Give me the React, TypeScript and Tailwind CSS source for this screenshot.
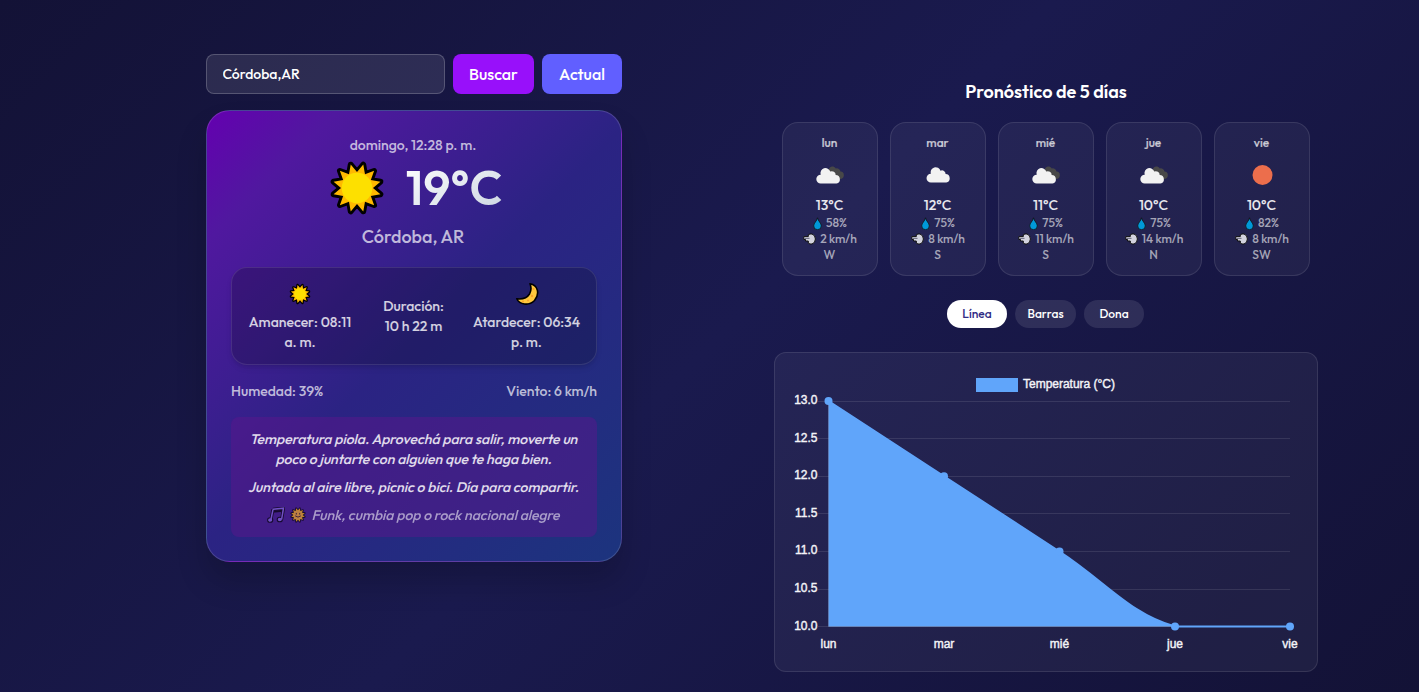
import React from "react";

const RAYS = 12;
function starPoints(outer: number, inner: number, n: number) {
  return Array.from({ length: n * 2 }, (_, i) => {
    const r = i % 2 ? inner : outer;
    const a = (Math.PI * i) / n - Math.PI / 2 + Math.PI / n;
    return `${(32 + r * Math.cos(a)).toFixed(2)},${(32 + r * Math.sin(a)).toFixed(2)}`;
  }).join(" ");
}

function Sun({ size, outline = 6, face = false }: { size: number; outline?: number; face?: boolean }) {
  return (
    <svg width={size} height={size} viewBox="0 0 64 64" className="block shrink-0">
      <polygon points={starPoints(25, 16.5, RAYS)} fill="none" stroke="#000" strokeWidth={outline} strokeLinejoin="round" />
      <polygon points={starPoints(25, 16.5, RAYS)} fill="#ffb900" />
      <circle cx="32" cy="32" r="15.800" fill={face ? "#ffb620" : "#fde000"} />
      {face && (
        <g stroke="#3a2410" strokeWidth="3.500" fill="none" strokeLinecap="round">
          <path d="M26 26v3M38 26v3M23 36q9 8 18 0" />
        </g>
      )}
    </svg>
  );
}

function Moon() {
  return (
    <svg width="24" height="24" viewBox="0 0 24 24" className="block">
      <path d="M15 1.7C23 3 25 12 19.5 18.5C14 24 4.500 23 1.800 16.800C8 17.500 12 16 14.500 12C16.500 8.500 16.300 5 15 1.700Z" fill="#ffc83d" stroke="#000" strokeWidth="1.600" strokeLinejoin="round" />
      <circle cx="18.500" cy="7" r="1.100" fill="#f9a32b" />
      <circle cx="17" cy="14" r="1.200" fill="#f9a32b" />
      <circle cx="8" cy="19.500" r="1" fill="#f9a32b" />
      <circle cx="13" cy="18.500" r="1" fill="#f9a32b" />
    </svg>
  );
}

function Notes() {
  return (
    <svg width="18" height="16" viewBox="0 0 18 16" className="block">
      <path d="M6 2.300L16.500 1.200L14.600 12.500M6 2.300L3.900 13" stroke="#000" strokeWidth="3.200" fill="none" />
      <path d="M5.600 4.800L16 3.700" stroke="#000" strokeWidth="2" fill="none" />
      <ellipse cx="3.200" cy="13" rx="2.600" ry="2.300" fill="#8b6ce8" stroke="#000" strokeWidth="1.100" />
      <ellipse cx="12.800" cy="12.500" rx="2.600" ry="2.300" fill="#8b6ce8" stroke="#000" strokeWidth="1.100" />
      <path d="M6 2.300L16.500 1.200L14.600 12.500M6 2.300L3.900 13" stroke="#8b6ce8" strokeWidth="1.500" fill="none" />
    </svg>
  );
}

const CLOUD = "M5 17A4.400 4.400 0 0 1 4.900 8.200A5 5 0 0 1 14.500 5.200A3.600 3.600 0 0 1 19.600 8.500A4.300 4.300 0 0 1 20.300 17Z";

function WeatherIcon({ kind }: { kind: string }) {
  if (kind === "clear")
    return (
      <svg width="28" height="20" viewBox="0 0 28 20" className="block">
        <circle cx="14.500" cy="10" r="10" fill="#ec6e4c" />
      </svg>
    );
  if (kind === "cloud")
    return (
      <svg width="26" height="16" viewBox="-.5 1.500 25 16" className="block">
        <path d={CLOUD} fill="#f2f2f2" />
      </svg>
    );
  return (
    <svg width="28" height="18" viewBox="0 0 28 18" className="block">
      <path d="M12.500 5.500C12 1 17 -1.500 19.800 2.500A3.800 3.800 0 0 1 24.500 5.600A3.600 3.600 0 0 1 27.800 9.500C27.800 12 26 13.500 23 13Z" fill="#484848" />
      <path d="M4.700 17.500A4.400 4.400 0 0 1 4.700 8.700A5 5 0 0 1 14.300 5.600A3.800 3.800 0 0 1 19.700 9A4.300 4.300 0 0 1 20.500 17.500Z" fill="#f2f2f2" />
    </svg>
  );
}

function Drop() {
  return (
    <svg width="9" height="13" viewBox="0 0 9 13" className="block">
      <path d="M4.500 .8C5 4 8.300 6 8.300 8.900A3.800 3.800 0 0 1 .7 8.900C.7 6 4 4 4.500 .8Z" fill="#0099d8" stroke="#111" strokeWidth=".8" />
    </svg>
  );
}

function Wind() {
  return (
    <svg width="13" height="12" viewBox="0 0 13 12" className="block">
      <path d="M.8 3.600H5.300V1.700Q7 .6 9 1Q12.400 2.200 12.400 6Q12.300 10 9 11Q7 11.300 5.300 10.200V8H2.500V6.500H.8Z" fill="#d3d3de" stroke="#111" strokeWidth="1" strokeLinejoin="round" />
      <path d="M1.200 5.400H6.500" stroke="#77778a" strokeWidth="1.200" />
    </svg>
  );
}

const DAYS = [
  { day: "lun", kind: "clouds", temp: "13°C", hum: "58%", wind: "2 km/h", dir: "W" },
  { day: "mar", kind: "cloud", temp: "12°C", hum: "75%", wind: "8 km/h", dir: "S" },
  { day: "mié", kind: "clouds", temp: "11°C", hum: "75%", wind: "11 km/h", dir: "S" },
  { day: "jue", kind: "clouds", temp: "10°C", hum: "75%", wind: "14 km/h", dir: "N" },
  { day: "vie", kind: "clear", temp: "10°C", hum: "82%", wind: "8 km/h", dir: "SW" },
];

function DayCard({ d }: { d: (typeof DAYS)[number] }) {
  return (
    <div className="flex h-[154px] w-24 flex-col items-center rounded-2xl border border-white/10 bg-white/5 pt-3 pr-px text-xs font-medium leading-4 text-white/60">
      <div className="text-white/70 [-webkit-text-stroke:0.2px]">{d.day}</div>
      <div className="flex h-[46px] items-center pt-0.5">
        <WeatherIcon kind={d.kind} />
      </div>
      <div className="mb-px text-sm leading-[17px] text-white/90">{d.temp}</div>
      <div className="flex items-center gap-1 pl-px"><Drop />{d.hum}</div>
      <div className="flex items-center gap-1 whitespace-nowrap pl-px"><Wind />{d.wind}</div>
      <div>{d.dir}</div>
    </div>
  );
}

const TICKS = ["13.0", "12.5", "12.0", "11.5", "11.0", "10.5", "10.0"];

function Chart() {
  return (
    <svg width="542" height="318" viewBox="775 353 542 318" className="block" fontFamily="'Liberation Sans', sans-serif" fontSize="12" fill="#f4f4f8" stroke="none">
      <rect x="976" y="378" width="42" height="14" fill="#60a5fa" />
      <text x="1023" y="388" textLength="92" stroke="#f4f4f8" strokeWidth=".4">Temperatura (°C)</text>
      {TICKS.map((t, i) => (
        <g key={t}>
          <path d={`M818 ${Math.floor(401 + i * 37.6) + 0.5}H1290`} stroke="#fff" strokeOpacity=".1" />
          <text x="817.500" y={404 + i * 37.6} textAnchor="end" stroke="#f4f4f8" strokeWidth=".4">{t}</text>
        </g>
      ))}
      <path d="M828.500 401L944 476.300L1059.500 551.500C1106 582 1130 614 1175 626.500H828.500Z" fill="#60a5fa" />
      <path d="M828.500 401V626.500H1175" stroke="#fff" strokeOpacity=".15" fill="none" />
      <path d="M828.500 401L944 476.300L1059.500 551.500C1106 582 1130 614 1175 626.500H1290" stroke="#60a5fa" strokeWidth="2" fill="none" />
      {[[828.5, 401], [944, 476.3], [1059.5, 551.5], [1175, 626.5], [1290, 626.5]].map(([x, y], i) => (
        <g key={i}>
          <circle cx={x} cy={y} r="4" fill="#60a5fa" />
          <text x={x} y="648" textAnchor="middle" stroke="#f4f4f8" strokeWidth=".4">{DAYS[i].day}</text>
        </g>
      ))}
    </svg>
  );
}

export default function App() {
  return (
    <div className="flex h-[692px] w-full overflow-hidden bg-[linear-gradient(135deg,#131236_0%,#1a1a4e_50%,#131236_100%)] pl-[206px] font-['Outfit','Lato',sans-serif] text-white">
      <div className="w-[416px] shrink-0 pt-[54px]">
        <div className="flex h-10 gap-2">
          <input defaultValue="Córdoba,AR" className="w-[239px] rounded-lg border border-white/20 bg-white/10 px-[15.5px] text-sm font-medium text-white outline-none" />
          <button className="w-[81px] rounded-lg bg-[#9810fa] text-base font-medium">Buscar</button>
          <button className="w-20 rounded-lg bg-[#615fff] text-base font-medium">Actual</button>
        </div>
        <div className="mt-4 flex h-[452px] flex-col rounded-3xl border border-white/15 bg-[linear-gradient(135deg,#6400b0_0%,#50189f_15%,#2b2383_50%,#1c347e_100%)] px-6 pt-6 text-sm font-medium leading-5 text-white/70 shadow-[0_20px_30px_rgba(0,0,0,0.18)]">
          <div className="pr-0.5 text-center">domingo, 12:28 p. m.</div>
          <div className="mt-0.5 flex h-[60px] items-center justify-center gap-[18px]">
            <div className="pt-0.5"><Sun size={62} /></div>
            <div className="bg-linear-to-br from-white to-[#cbd5e1] bg-clip-text text-5xl font-semibold leading-[60px] text-transparent">19°C</div>
          </div>
          <div className="mt-1.5 pr-0.5 text-center text-lg leading-7">Córdoba, AR</div>
          <div className="mt-4 flex h-[98px] items-center justify-between rounded-2xl border border-white/10 bg-black/20 px-4 text-white/80 shadow-md">
            <div className="flex w-[104px] flex-col items-center whitespace-nowrap text-center">
              <div className="h-8 pt-0.5"><Sun size={24} outline={6.5} /></div>
              <span>Amanecer: 08:11<br />a. m.</span>
            </div>
            <div className="pl-0.5 text-center">Duración:<br />10 h 22 m</div>
            <div className="flex w-[107px] flex-col items-center whitespace-nowrap text-center">
              <div className="h-8 pt-0.5"><Moon /></div>
              <span>Atardecer: 06:34<br />p. m.</span>
            </div>
          </div>
          <div className="mt-4 flex justify-between"><span>Humedad: 39%</span><span>Viento: 6 km/h</span></div>
          <div className="mt-4 flex h-[120px] flex-col gap-2 whitespace-nowrap rounded-lg bg-[#59168b]/50 pt-3 pr-px text-center italic text-white/85">
            <p>Temperatura piola. Aprovechá para salir, moverte un<br />poco o juntarte con alguien que te haga bien.</p>
            <p>Juntada al aire libre, picnic o bici. Día para compartir.</p>
            <div className="flex items-center justify-center gap-1 opacity-65"><Notes /><Sun size={18} face /><span>Funk, cumbia pop o rock nacional alegre</span></div>
          </div>
        </div>
      </div>
      <div className="ml-[152px] flex w-[544px] shrink-0 flex-col items-center pt-[78px]">
        <h2 className="text-lg font-semibold leading-7">Pronóstico de 5 días</h2>
        <div className="mt-4 flex gap-3">{DAYS.map((d) => <DayCard key={d.day} d={d} />)}</div>
        <div className="mt-6 flex h-7 gap-2 pr-px text-xs font-medium">
          <button className="w-[60px] rounded-full bg-white text-[#312c85]">Línea</button>
          <button className="w-[61px] rounded-full bg-white/10">Barras</button>
          <button className="w-[60px] rounded-full bg-white/10">Dona</button>
        </div>
        <div className="mt-6 h-80 w-[544px] overflow-hidden rounded-xl border border-white/10 bg-white/5"><Chart /></div>
      </div>
    </div>
  );
}
